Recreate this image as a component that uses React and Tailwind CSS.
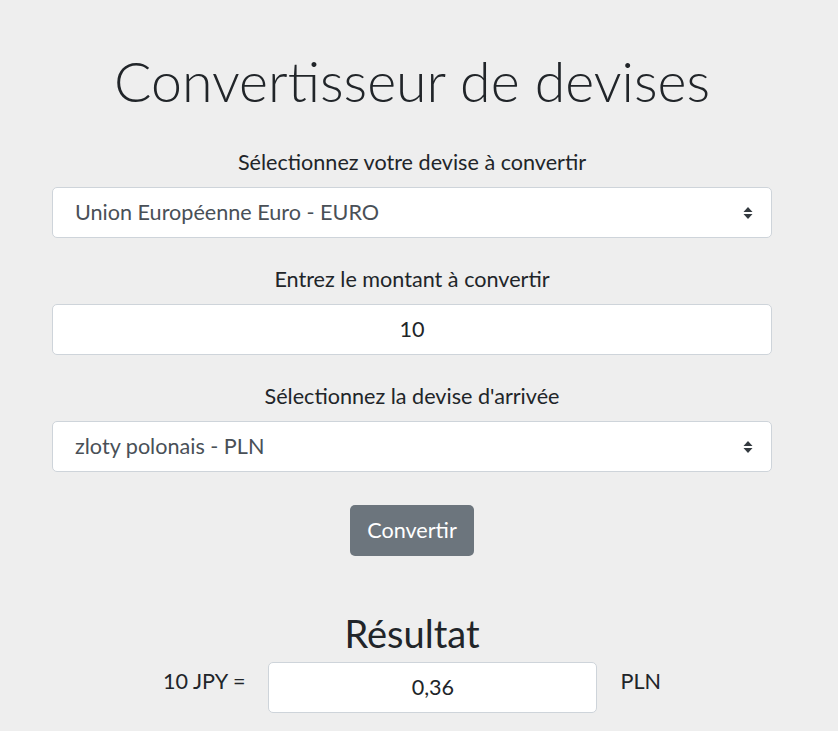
import React from 'react';

const Arrows = () => (
  <svg className="w-[10px] h-[14px]" viewBox="0 0 10 14" fill="#343a40">
    <path d="M5 1L9.5 6H0.5z" />
    <path d="M5 13L0.5 8H9.5z" />
  </svg>
);

const Select = ({ value }) => (
  <div className="flex items-center justify-between h-[51px] bg-white border border-[#ced4da] rounded-[5px] pl-[22px] pr-[18px] text-[21.6px] text-[#495057]">
    <span>{value}</span>
    <Arrows />
  </div>
);

const Label = ({ children }) => (
  <div className="text-center text-[21.6px] leading-[30px] text-[#212529]">{children}</div>
);

export default function App() {
  return (
    <div className="min-h-screen bg-[#eeeeee]" style={{ fontFamily: 'Lato, "Noto Sans", sans-serif' }}>
      <div className="ml-[52px] w-[720px] pt-[47px] pb-4">
        <h1 className="text-center text-[55.5px] leading-[67px] font-light text-[#212529]">Convertisseur de devises</h1>

        <div className="mt-[33px]">
          <Label>Sélectionnez votre devise à convertir</Label>
          <div className="mt-[10px]">
            <Select value="Union Européenne Euro - EURO" />
          </div>
        </div>

        <div className="mt-[26px]">
          <Label>Entrez le montant à convertir</Label>
          <div className="mt-[10px] flex items-center justify-center h-[51px] bg-white border border-[#ced4da] rounded-[5px] text-[21.6px] text-[#212529]">
            10
          </div>
        </div>

        <div className="mt-[26px]">
          <Label>Sélectionnez la devise d'arrivée</Label>
          <div className="mt-[10px]">
            <Select value="zloty polonais - PLN" />
          </div>
        </div>

        <div className="mt-[33px] flex justify-center">
          <button className="w-[124px] h-[51px] bg-[#6c757d] text-white text-[21.6px] rounded-[5px]">Convertir</button>
        </div>

        <h2 className="mt-[54px] text-center text-[38px] leading-[46px] text-[#212529]">Résultat</h2>

        <div className="mt-[6px] flex justify-center items-start gap-[23px] text-[21.6px] text-[#212529]">
          <span className="mt-[4px] leading-[30px]">10 JPY =</span>
          <div className="w-[329px] h-[51px] flex items-center justify-center bg-white border border-[#ced4da] rounded-[5px]">0,36</div>
          <span className="mt-[4px] leading-[30px]">PLN</span>
        </div>
      </div>
    </div>
  );
}
